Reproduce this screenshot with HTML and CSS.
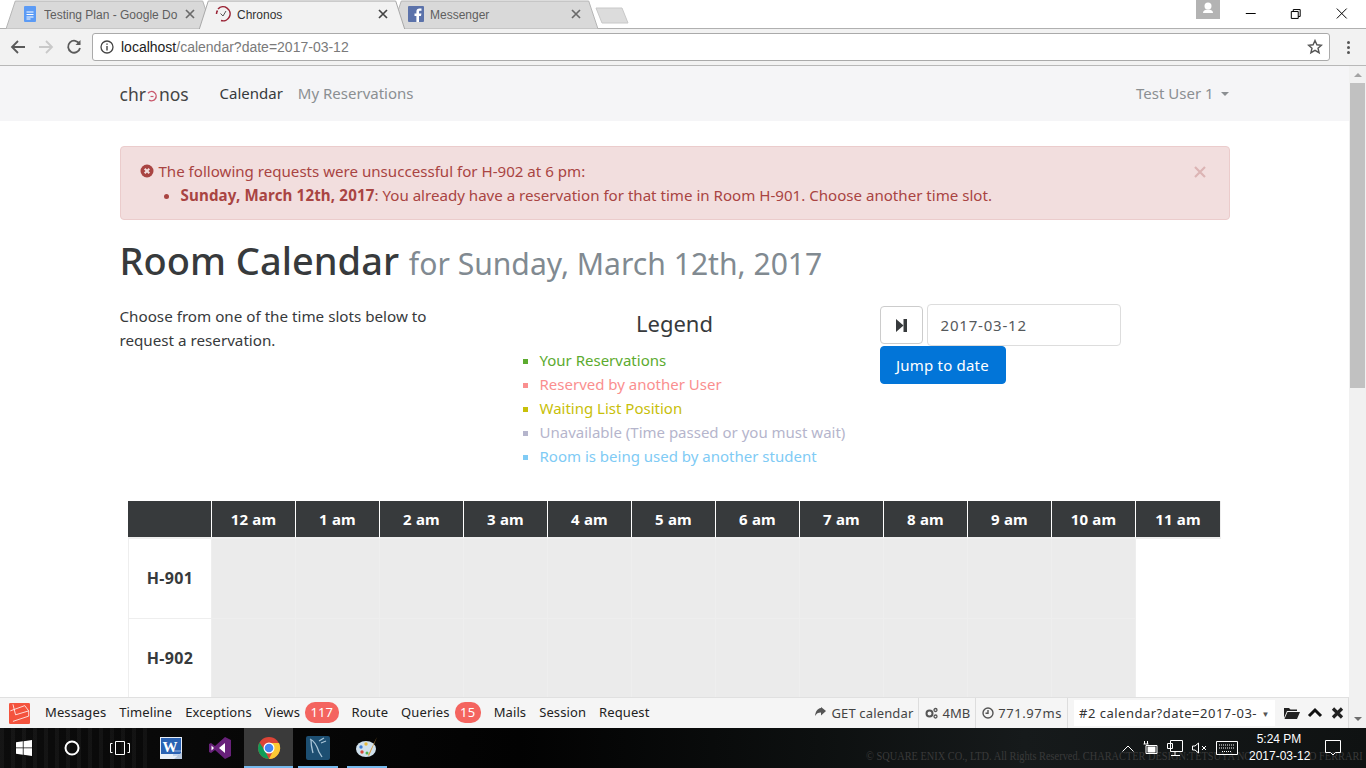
FILE: index.html

```html
<!DOCTYPE html>
<html lang="en">
<head>
  <meta charset="UTF-8">
  <title>Chronos</title>
  <link rel="stylesheet" href="styles.css">
</head>
<body>
<div class="screen">
  <!-- browser chrome -->
  <div class="tabstrip">
    <div class="tab tab-first">
      <svg class="tab-shape" viewBox="0 0 100 28" preserveAspectRatio="none"><path d="M0 28 L4.500 1 H95.500 L100 28Z" fill="#d9d9d9" stroke="#b5b5b5" vector-effect="non-scaling-stroke"/></svg>
      <svg class="tab-icon" viewBox="0 0 16 16"><rect x="2" y="0" width="12" height="16" rx="1" fill="#5c9bf5"/><path d="M4.500 6h7M4.500 8.500h7M4.500 11h7M4.500 13h4" stroke="#fff" stroke-width="1"/></svg>
      <span class="tab-title">Testing Plan - Google Do</span>
      <svg class="tab-x" viewBox="0 0 10 10"><path d="M1 1l8 8M9 1l-8 8" stroke="#6a6a6a" stroke-width="1.700"/></svg>
    </div>
    <div class="tab tab-active">
      <svg class="tab-shape" viewBox="0 0 100 28" preserveAspectRatio="none"><path d="M0 29 L4.500 1 H95.500 L100 29" fill="#f2f2f2" stroke="#a8a8a8" vector-effect="non-scaling-stroke"/></svg>
      <svg class="tab-icon" viewBox="0 0 16 16" fill="none"><path d="M3 3 A7 7 0 1 1 6 14.500" stroke="#9a2436" stroke-width="1.500"/><path d="M1.500 8 A7 7 0 0 1 2.500 4.500" stroke="#9a2436" stroke-width="1.500"/><path d="M5.500 7.500 L8 10 L11 5" stroke="#555" stroke-width="1"/></svg>
      <span class="tab-title dark">Chronos</span>
      <svg class="tab-x" viewBox="0 0 10 10"><path d="M1 1l8 8M9 1l-8 8" stroke="#444" stroke-width="1.700"/></svg>
    </div>
    <div class="tab tab-last">
      <svg class="tab-shape" viewBox="0 0 100 28" preserveAspectRatio="none"><path d="M0 28 L4.500 1 H95.500 L100 28Z" fill="#d9d9d9" stroke="#b5b5b5" vector-effect="non-scaling-stroke"/></svg>
      <svg class="tab-icon" viewBox="0 0 16 16"><rect width="16" height="16" rx="1" fill="#5b72aa"/><path d="M11 16V10h2l.4-2.500H11V6c0-.8.300-1.200 1.200-1.200h1.300V2.600H11.600C9.500 2.600 8.400 3.800 8.400 5.800v1.700H6.500V10h1.900v6z" fill="#fff"/></svg>
      <span class="tab-title">Messenger</span>
      <svg class="tab-x" viewBox="0 0 10 10"><path d="M1 1l8 8M9 1l-8 8" stroke="#6a6a6a" stroke-width="1.700"/></svg>
    </div>
    <svg class="new-tab" viewBox="0 0 34 17" width="34" height="17"><path d="M1 1 H27 L33 16 H7Z" fill="#dcdcdc" stroke="#c8c8c8"/></svg>
    <div class="win-controls">
      <div class="profile"><svg viewBox="0 0 24 19" width="24" height="19"><circle cx="12" cy="6" r="3.500" fill="#fff"/><path d="M7 13 Q7 9.500 12 9.500 Q17 9.500 17 13Z" fill="#fff"/></svg></div>
      <svg class="win-btn" viewBox="0 0 46 28"><path d="M18 13.500h10" stroke="#000"/></svg>
      <svg class="win-btn" viewBox="0 0 46 28"><path d="M18.500 11.500h7v7h-7zM20.500 11.500v-2h7v7h-2" fill="none" stroke="#000"/></svg>
      <svg class="win-btn" viewBox="0 0 46 28"><path d="M18 8.500l10 10M28 8.500l-10 10" stroke="#000"/></svg>
    </div>
  </div>
  <div class="toolbar">
    <svg class="tool-icon" viewBox="0 0 16 16" fill="none" stroke="#5a5a5a" stroke-width="1.800"><path d="M15 8H2M8 2L2 8l6 6"/></svg>
    <svg class="tool-icon" viewBox="0 0 16 16" fill="none" stroke="#c9c9c9" stroke-width="1.800"><path d="M1 8h13M8 2l6 6-6 6"/></svg>
    <svg class="tool-icon" viewBox="0 0 16 16" fill="none" stroke="#5a5a5a" stroke-width="1.800"><path d="M13.500 5A6 6 0 1 0 14 9"/><path d="M14.500 1v5h-5" fill="#5a5a5a" stroke="none"/></svg>
    <div class="omnibox">
      <svg class="info-icon" viewBox="0 0 14 14"><circle cx="7" cy="7" r="6" fill="none" stroke="#444" stroke-width="1.300"/><path d="M7 6v4.500M7 3.500v1.300" stroke="#444" stroke-width="1.400"/></svg>
      <span class="url"><span class="url-host">localhost</span>/calendar?date=2017-03-12</span>
      <svg class="star" viewBox="0 0 16 16"><path d="M8 1.500l1.900 4.300 4.600.4-3.500 3 1.100 4.500L8 11.300l-4.100 2.400L5 9.200l-3.500-3 4.600-.4z" fill="none" stroke="#555" stroke-width="1.400"/></svg>
    </div>
    <div class="menu-dots"><i></i><i></i><i></i></div>
  </div>

  <!-- page viewport -->
  <div class="viewport">
    <div class="page">
      <nav class="navbar">
        <div class="container nav-inner">
          <span class="brand">chr<svg class="brand-o" viewBox="0 0 12 12" fill="none"><path d="M2 3.200A4.600 4.600 0 1 1 3 10" stroke="#c9586c" stroke-width="1.400"/><path d="M4.500 6.500h3" stroke="#c9586c" stroke-width="1.200"/></svg>nos</span>
          <a class="nav-link active">Calendar</a>
          <a class="nav-link">My Reservations</a>
          <a class="nav-link nav-user">Test User 1 <span class="caret"></span></a>
        </div>
      </nav>
      <main class="container">
        <div class="alert">
          <svg class="alert-close" viewBox="0 0 12 12"><path d="M1 1l10 10M11 1L1 11" stroke="#dcb4b4" stroke-width="2.200"/></svg>
          <div><svg class="alert-icon" viewBox="0 0 14 14"><circle cx="7" cy="7" r="6.500" fill="#a94442"/><path d="M4.700 4.700l4.600 4.600M9.300 4.700l-4.600 4.600" stroke="#f2dede" stroke-width="2"/></svg> The following requests were unsuccessful for H-902 at 6 pm:</div>
          <ul>
            <li><strong>Sunday, March 12th, 2017</strong>: You already have a reservation for that time in Room H-901. Choose another time slot.</li>
          </ul>
        </div>
        <h1>Room Calendar <small>for Sunday, March 12th, 2017</small></h1>
        <div class="intro">
          <p class="intro-text">Choose from one of the time slots below to request a reservation.</p>
          <div class="legend">
            <h4>Legend</h4>
            <ul>
              <li class="c-green">Your Reservations</li>
              <li class="c-red">Reserved by another User</li>
              <li class="c-yellow">Waiting List Position</li>
              <li class="c-grey">Unavailable (Time passed or you must wait)</li>
              <li class="c-blue">Room is being used by another student</li>
            </ul>
          </div>
          <div class="jump">
            <div class="jump-row">
              <button class="btn-today"><svg viewBox="0 0 11 13" width="11" height="13"><path d="M0 0l7.500 6.500L0 13z" fill="#373a3c"/><path d="M7.500 0H11v13H7.500z" fill="#373a3c"/></svg></button>
              <div class="date-input">2017-03-12</div>
            </div>
            <button class="btn-jump">Jump to date</button>
          </div>
        </div>
        <div class="calendar">
          <div class="cal-head blank"></div>
          <div class="cal-head">12 am</div><div class="cal-head">1 am</div><div class="cal-head">2 am</div><div class="cal-head">3 am</div><div class="cal-head">4 am</div><div class="cal-head">5 am</div><div class="cal-head">6 am</div><div class="cal-head">7 am</div><div class="cal-head">8 am</div><div class="cal-head">9 am</div><div class="cal-head">10 am</div><div class="cal-head cal-head-last">11 am</div>
          <div class="cal-room">H-901</div>
          <div class="slot"></div><div class="slot"></div><div class="slot"></div><div class="slot"></div><div class="slot"></div><div class="slot"></div><div class="slot"></div><div class="slot"></div><div class="slot"></div><div class="slot"></div><div class="slot"></div><div></div>
          <div class="cal-room">H-902</div>
          <div class="slot"></div><div class="slot"></div><div class="slot"></div><div class="slot"></div><div class="slot"></div><div class="slot"></div><div class="slot"></div><div class="slot"></div><div class="slot"></div><div class="slot"></div><div class="slot"></div><div></div>
        </div>
      </main>
    </div>
    <div class="scrollbar">
      <span class="arrow-up"></span>
      <div class="thumb"></div>
      <span class="arrow-down"></span>
    </div>

    <!-- debug bar sits over the page -->
    <div class="debugbar">
      <svg class="dbg-logo" viewBox="0 0 16 16"><rect width="16" height="16" rx="1" fill="#f4533d"/><path d="M1 6L12 2l3 4M3 14l12-4V6L5 9 3 1" fill="none" stroke="#fff" stroke-width=".6"/></svg>
      <span class="dbg-tab">Messages</span>
      <span class="dbg-tab">Timeline</span>
      <span class="dbg-tab">Exceptions</span>
      <span class="dbg-tab">Views <b class="badge">117</b></span>
      <span class="dbg-tab">Route</span>
      <span class="dbg-tab">Queries <b class="badge">15</b></span>
      <span class="dbg-tab">Mails</span>
      <span class="dbg-tab">Session</span>
      <span class="dbg-tab">Request</span>
      <div class="dbg-right">
        <span class="dbg-stat dbg-route"><svg viewBox="0 0 14 12" width="14" height="12"><path d="M8 1C4 1.500 2.500 5 2 9 3.500 6.500 5 5.500 8 5.500V8.500L13 4 8 0z" fill="#555"/></svg> GET calendar</span>
        <span class="dbg-stat dbg-mem"><svg viewBox="0 0 14 12" width="15" height="12"><circle cx="5" cy="6.500" r="3" fill="none" stroke="#555" stroke-width="2"/><circle cx="11" cy="3" r="1.500" fill="none" stroke="#555" stroke-width="1.300"/><circle cx="11" cy="9.500" r="1.500" fill="none" stroke="#555" stroke-width="1.300"/></svg> 4MB</span>
        <span class="dbg-stat dbg-time"><svg viewBox="0 0 12 12" width="12" height="12" fill="none" stroke="#555" stroke-width="1.400"><circle cx="6" cy="6" r="5"/><path d="M6 3v3.300H3.500"/></svg> 771.97ms</span>
        <div class="dbg-select"><span>#2 calendar?date=2017-03-</span><i>▼</i></div>
        <svg class="dbg-btn" viewBox="0 0 16 14"><path d="M0 2h5l1.500 1.500H13V5H3L0 12zM3.500 6H16l-3 7H0.500z" fill="#222"/></svg>
        <svg class="dbg-btn" viewBox="0 0 16 14"><path d="M2 10l6-6 6 6" fill="none" stroke="#111" stroke-width="3"/></svg>
        <svg class="dbg-btn" viewBox="0 0 16 14"><path d="M3 2.500l9 9M12 2.500l-9 9" stroke="#222" stroke-width="3.200"/></svg>
      </div>
    </div>
  </div>

  <!-- windows taskbar -->
  <div class="taskbar">
    <span class="wall-text">© SQUARE ENIX CO., LTD. All Rights Reserved. CHARACTER DESIGN:TETSUYA NO</span>
    <span class="wall-text wall-end">O FERRARI</span>
    <div class="task-cell"><svg viewBox="0 0 16 16" width="16" height="16"><path d="M0 2.300L6.800 1.300V7.500H0zM7.600 1.200L16 0V7.500H7.600zM0 8.300H6.800V14.700L0 13.700zM7.600 8.300H16V16L7.600 14.800z" fill="#fff"/></svg></div>
    <div class="task-cell"><svg viewBox="0 0 16 16" width="16" height="16"><circle cx="8" cy="8" r="6.500" fill="none" stroke="#fff" stroke-width="2"/></svg></div>
    <div class="task-cell"><svg viewBox="0 0 22 16" width="22" height="16" fill="none" stroke="#fff"><path d="M6.500 1.500h9v13h-9zM3.500 3.500h-2v9h2M18.500 3.500h2v9h-2"/></svg></div>
    <div class="task-cell app app-first"><svg viewBox="0 0 22 22" width="22" height="22"><rect width="22" height="22" fill="#e8eef6"/><rect x="1" y="1" width="20" height="16" fill="#2a62b3"/><path d="M14 22l8-7v7z" fill="#b9c9de"/><path d="M13 14h8M13 18h6" stroke="#9ab5dc"/><text x="10" y="15" class="word-w">W</text></svg></div>
    <div class="task-cell app"><svg viewBox="0 0 24 24" width="24" height="24"><path d="M17 1l6 3v16l-6 3-10-9-4 3-2-1V8l2-1 4 3z" fill="#68217a"/><path d="M17 7v10l-6-5zM3.500 9.500v5l2.500-2.500z" fill="#fff"/></svg></div>
    <div class="task-cell app running"><svg viewBox="0 0 24 24" width="24" height="24"><circle cx="12" cy="12" r="11" fill="#db4437"/><path d="M12 23A11 11 0 0 1 2.500 6.500L8 15z" fill="#0f9d58"/><path d="M12 23A11 11 0 0 0 22 7H12l4 8z" fill="#fcc934"/><circle cx="12" cy="12" r="5.500" fill="#fff"/><circle cx="12" cy="12" r="4.300" fill="#4285f4"/></svg></div>
    <div class="task-cell app open"><svg viewBox="0 0 24 24" width="24" height="24"><rect x="0" y="0" width="24" height="24" rx="2" fill="#1d4f72"/><path d="M4 3c5 2 7 7 9 13l3 5M5 4c0 6 1 9 2 13M13 5l5-3M15 7l5-2" fill="none" stroke="#a9c5d8" stroke-width="1.300"/></svg></div>
    <div class="task-cell app open"><svg viewBox="0 0 24 24" width="24" height="24"><ellipse cx="11" cy="13" rx="10" ry="8" fill="#cfe0ec"/><circle cx="6" cy="11" r="1.700" fill="#3a7bd5"/><circle cx="11" cy="8" r="1.700" fill="#e8b93c"/><circle cx="7" cy="16" r="1.700" fill="#d5483a"/><circle cx="12" cy="17" r="1.500" fill="#4caf50"/><path d="M22 1l-8 19-1-1z" fill="#d99a3c"/></svg></div>
    <div class="tray">
      <svg viewBox="0 0 12 7" width="12" height="7" fill="none" stroke="#fff"><path d="M.5 6.500l5.500-5.500 5.500 5.500"/></svg>
      <svg viewBox="0 0 15 16" width="15" height="16" fill="none" stroke="#fff"><path d="M3 5.500h11v8H3zM1.500 1v3M4.500 1v3M0.500 4h5"/><rect x="5" y="7" width="7" height="5" fill="#fff"/></svg>
      <svg viewBox="0 0 16 18" width="16" height="18" fill="none" stroke="#fff"><path d="M3.500 1.500h12v11h-12zM.5 4.500h5v5h-5zM8 12.500v3.500M4 16.500h9"/></svg>
      <svg viewBox="0 0 15 14" width="15" height="14" fill="none" stroke="#fff"><path d="M.5 5v4h2.500l3.500 3V2L3 5zM10 5l4 4M14 5l-4 4"/></svg>
      <svg viewBox="0 0 22 14" width="22" height="14" fill="none" stroke="#fff"><path d="M.5.500h21v13H.500z"/><path d="M3 4h16M3 7h16M6 10.500h10" stroke-dasharray="1 1"/></svg>
      <div class="clock"><div>5:24 PM</div><div>2017-03-12</div></div>
      <svg class="notify" viewBox="0 0 16 16" width="16" height="16" fill="none" stroke="#fff"><path d="M.5.500h15v12h-5L8 15l-2.500-2.500h-5z"/></svg>
    </div>
  </div>
</div>
</body>
</html>
```

FILE: styles.css

```css
* { box-sizing: border-box; }
html, body { margin: 0; padding: 0; height: 100%; overflow: hidden; }
body {
  font-family: "Noto Sans", "Open Sans", sans-serif;
  font-size: 16px;
  color: #373a3c;
  background: #fff;
}
.screen {
  width: 1366px;
  height: 768px;
  display: flex;
  flex-direction: column;
  overflow: hidden;
}

/* chrome */
.tabstrip {
  height: 29px;
  display: flex;
  align-items: flex-start;
  background: #fff;
  border-bottom: 1px solid #b0b0b0;
  padding-left: 6px;
  flex: none;
}
.tab {
  position: relative;
  width: 206px;
  height: 28px;
  margin-right: -13px;
  display: flex;
  align-items: center;
  font-size: 12px;
  font-family: "Liberation Sans", sans-serif;
  padding: 0 17px 0 16px;
  flex: none;
}
.tab-active { z-index: 2; }
.tab-last { margin-right: 0; }
.tab-shape { position: absolute; left: 0; top: 0; width: 100%; height: 29px; }
.tab-icon { position: relative; width: 16px; height: 16px; margin-right: 6px; flex: none; }
.tab-title { position: relative; color: #5f5f5f; flex: 1; padding-top: 2px; white-space: nowrap; overflow: hidden; }
.tab-title.dark { color: #333; }
.tab-x { position: relative; width: 10px; height: 10px; flex: none; }
.new-tab { margin: 7px 0 0 -3px; }
.win-controls { margin-left: auto; display: flex; align-items: flex-start; padding-right: 2px; }
.profile { width: 24px; height: 19px; background: #b3b3b3; margin-right: 7.500px; }
.profile svg { display: block; }
.win-btn { width: 45.500px; height: 28px; }
.toolbar {
  height: 37px;
  flex: none;
  display: flex;
  align-items: center;
  background: #f2f2f2;
  border-bottom: 1px solid #b8b8b8;
  padding-left: 10px;
}
.tool-icon { width: 16px; height: 16px; margin-right: 12px; flex: none; }
.toolbar .tool-icon:nth-child(3) { margin-right: 10px; }
.omnibox {
  width: 1238px;
  height: 28px;
  margin-top: -1px;
  background: #fff;
  border: 1px solid #aaa;
  border-radius: 3px;
  display: flex;
  align-items: center;
  padding: 0 6px 0 7px;
}
.info-icon { width: 14px; height: 14px; margin-right: 7px; }
.url { font-size: 14px; color: #7a7a7a; font-family: "Liberation Sans", sans-serif; flex: 1; }
.url-host { color: #222; }
.star { width: 16px; height: 16px; }
.menu-dots { display: flex; flex-direction: column; gap: 2px; margin-left: 17px; }
.menu-dots i { width: 3px; height: 3px; border-radius: 50%; background: #555; }

/* page */
.viewport { position: relative; flex: 1; display: flex; overflow: hidden; }
.page { flex: 1; min-width: 0; overflow: hidden; }
.container { width: 1140px; margin: 0 auto; padding: 0 15px; }
.navbar { height: 55px; background: #f5f5f7; }
.nav-inner { display: flex; align-items: center; height: 55px; padding-bottom: 2px; }
.brand {
  font-size: 17.500px;
  color: #444;
  width: 100px;
  margin-top: 3px;
  display: flex;
  align-items: center;
}
.brand-o { width: 12px; height: 12px; margin: 3px 1px 0 0; }
.nav-link { font-size: 15px; color: #8b8f92; margin-right: 15px; }
.nav-link.active { color: #373a3c; }
.nav-user { margin: 0 0 0 auto; padding-right: 1px; }
.caret {
  display: inline-block;
  width: 0;
  height: 0;
  margin-left: 3px;
  vertical-align: middle;
  border-top: 4px solid #8b8f92;
  border-left: 4px solid transparent;
  border-right: 4px solid transparent;
}
.alert {
  position: relative;
  margin-top: 25px;
  height: 74px;
  padding: 12px 20px;
  background: #f2dede;
  border: 1px solid #ebcccc;
  border-radius: 4px;
  color: #a94442;
  font-size: 15.100px;
  line-height: 24px;
}
.alert ul { margin: 0; padding-left: 40px; }
.alert strong { font-weight: 700; letter-spacing: .15px; }
.alert-icon { width: 14px; height: 14px; vertical-align: -1px; margin-left: -1px; margin-right: 1px; }
.alert-close { position: absolute; right: 23px; top: 19px; width: 12px; height: 12px; }
h1 {
  margin: 16px 0 0;
  font-size: 38px;
  line-height: 48px;
  font-weight: 500;
  color: #373a3c;
}
h1 small { font-size: 30.100px; font-weight: 400; color: #818a91; }
.intro { display: flex; margin-top: 16px; height: 197px; }
.intro-text { width: 380px; margin: 0; padding-right: 30px; font-size: 15.200px; line-height: 24px; }
.legend { width: 380px; padding-right: 30px; }
.legend h4 { margin: 4px 0 0; font-weight: 400; font-size: 22px; line-height: 30px; text-align: center; color: #373a3c; }
.legend ul { margin: 10px 0 0; padding-left: 40px; list-style: square; font-size: 15px; line-height: 24px; }
.c-green { color: #5cab2f; }
.c-red { color: #fa8f8f; }
.c-yellow { color: #c8c00a; }
.c-grey { color: #b5b5cc; }
.c-blue { color: #80cbf5; }
.jump-row { display: flex; gap: 4px; align-items: center; }
.btn-today {
  width: 43px;
  height: 38px;
  background: #fff;
  border: 1px solid #ccc;
  border-radius: 4px;
  display: flex;
  align-items: center;
  justify-content: center;
  padding: 0;
}
.date-input {
  width: 194px;
  height: 42px;
  border: 1px solid #ddd;
  border-radius: 4px;
  padding: 0 13px;
  line-height: 40px;
  font-size: 15px;
  letter-spacing: .8px;
  color: #55595c;
}
.btn-jump {
  display: block;
  height: 38px;
  width: 126px;
  background: #0275d8;
  color: #fff;
  border: 1px solid #0275d8;
  border-radius: 4px;
  font: inherit;
  font-size: 15px;
  letter-spacing: .2px;
  padding: 0;
}
.calendar {
  display: grid;
  width: 1094px;
  margin-left: 8.500px;
  grid-template-columns: repeat(12, 84px) 85px;
  grid-template-rows: 38px 80px 80px;
  background: #fff;
}
.cal-head {
  background: #373a3c;
  color: #fff;
  font-weight: 700;
  font-size: 15px;
  letter-spacing: .2px;
  display: flex;
  align-items: center;
  justify-content: center;
  border-right: 1px solid #fff;
  border-bottom: 2px solid #eee;
  height: 38px;
}
.cal-head-last { border-right-color: #eee; }
.cal-room {
  font-weight: 700;
  font-size: 16px;
  letter-spacing: .3px;
  display: flex;
  align-items: center;
  justify-content: center;
  border-left: 1px solid #eee;
  border-right: 1px solid #eee;
  border-bottom: 1px solid #eee;
  padding-bottom: 2px;
}
.slot { background: #ebebeb; border-right: 1px solid #eee; border-bottom: 1px solid #eee; }

/* scrollbar */
.scrollbar { width: 17px; flex: none; background: #f1f1f1; display: flex; flex-direction: column; align-items: center; }
.arrow-up { width: 0; height: 0; margin-top: 7px; border-left: 4px solid transparent; border-right: 4px solid transparent; border-bottom: 4px solid #a3a3a3; }
.thumb { width: 15px; height: 305px; margin-top: 6px; background: #c1c1c1; }
.arrow-down { width: 0; height: 0; margin: auto 0 7px; border-left: 4px solid transparent; border-right: 4px solid transparent; border-top: 4px solid #6e6e6e; }

/* debug bar */
.debugbar {
  position: absolute;
  left: 0;
  right: 17px;
  bottom: 0;
  height: 31px;
  background: #f5f5f5;
  border-top: 1px solid #e0e0e0;
  border-right: 1px solid #ddd;
  display: flex;
  align-items: center;
  font-size: 13px;
  color: #222;
  padding-left: 9px;
  z-index: 5;
}
.dbg-logo { width: 21px; height: 21px; margin-right: 15px; flex: none; }
.dbg-tab { margin-right: 13px; margin-bottom: 2px; letter-spacing: .1px; white-space: nowrap; display: flex; align-items: center; }
.badge {
  display: inline-block;
  margin-left: 5px;
  background: #f4645f;
  color: #fff;
  font-weight: 400;
  border-radius: 10px;
  padding: 0 5.500px;
  line-height: 20px;
  height: 21px;
  font-size: 13px;
}
.dbg-right { margin-left: auto; display: flex; align-items: center; height: 100%; padding-right: 2px; }
.dbg-stat { display: flex; align-items: center; gap: 4px; padding: 0 5px 0 6px; height: 100%; border-right: 1px solid #ddd; color: #444; white-space: nowrap; }
.dbg-route { letter-spacing: .15px; }
.dbg-mem { gap: 3px; padding-left: 5px; }
.dbg-time { letter-spacing: .6px; }
.dbg-select {
  width: 201px;
  height: 26px;
  margin: 0 9px 0 6px;
  background: #fff;
  display: flex;
  align-items: center;
  justify-content: space-between;
  padding: 0 5px;
  color: #333;
  letter-spacing: .5px;
  white-space: nowrap;
  overflow: hidden;
}
.dbg-select i { font-style: normal; font-size: 8px; color: #555; }
.dbg-btn { width: 16px; height: 14px; margin-right: 7px; flex: none; }
.dbg-btn:last-child { margin-right: 0; }

/* taskbar */
.taskbar {
  position: relative;
  height: 40px;
  flex: none;
  display: flex;
  align-items: center;
  background:
    repeating-linear-gradient(90deg, rgba(255,255,255,.04) 0 4px, transparent 4px 11px) 0 0 / 150px 100% no-repeat,
    linear-gradient(90deg, #0c0c0c 0, #060606 22%, #020202 38%, #0d1010 60%, #161a1b 75%, #0f1212 100%);
  overflow: hidden;
  color: #fff;
}
.wall-text {
  position: absolute;
  left: 866px;
  top: 22px;
  white-space: nowrap;
  font-family: "Liberation Serif", serif;
  font-size: 11.500px;
  color: #3a3a3a;
  transform: scaleX(.9);
  transform-origin: left center;
}
.wall-end { left: 1309px; }
.task-cell { position: relative; width: 48px; height: 40px; display: flex; align-items: center; justify-content: center; flex: none; }
.task-cell.app { width: 49px; }
.task-cell.app-first { margin-left: 2px; }
.task-cell.open::after {
  content: "";
  position: absolute;
  left: 5px;
  right: 4px;
  bottom: 0;
  height: 2px;
  background: #76b9ed;
}
.task-cell.running { background: #3a3a3a; box-shadow: inset 0 -2px 0 #76b9ed; }
.word-w { font-family: "Liberation Serif", serif; font-size: 15px; font-weight: 700; fill: #fff; text-anchor: middle; }
.tray { position: relative; margin-left: auto; display: flex; align-items: center; gap: 9px; padding-right: 25px; }
.clock { text-align: center; font-size: 12px; line-height: 17px; font-family: "Liberation Sans", sans-serif; margin-left: 2px; width: 60px; white-space: nowrap; }
.notify { margin-left: 7px; }
```
